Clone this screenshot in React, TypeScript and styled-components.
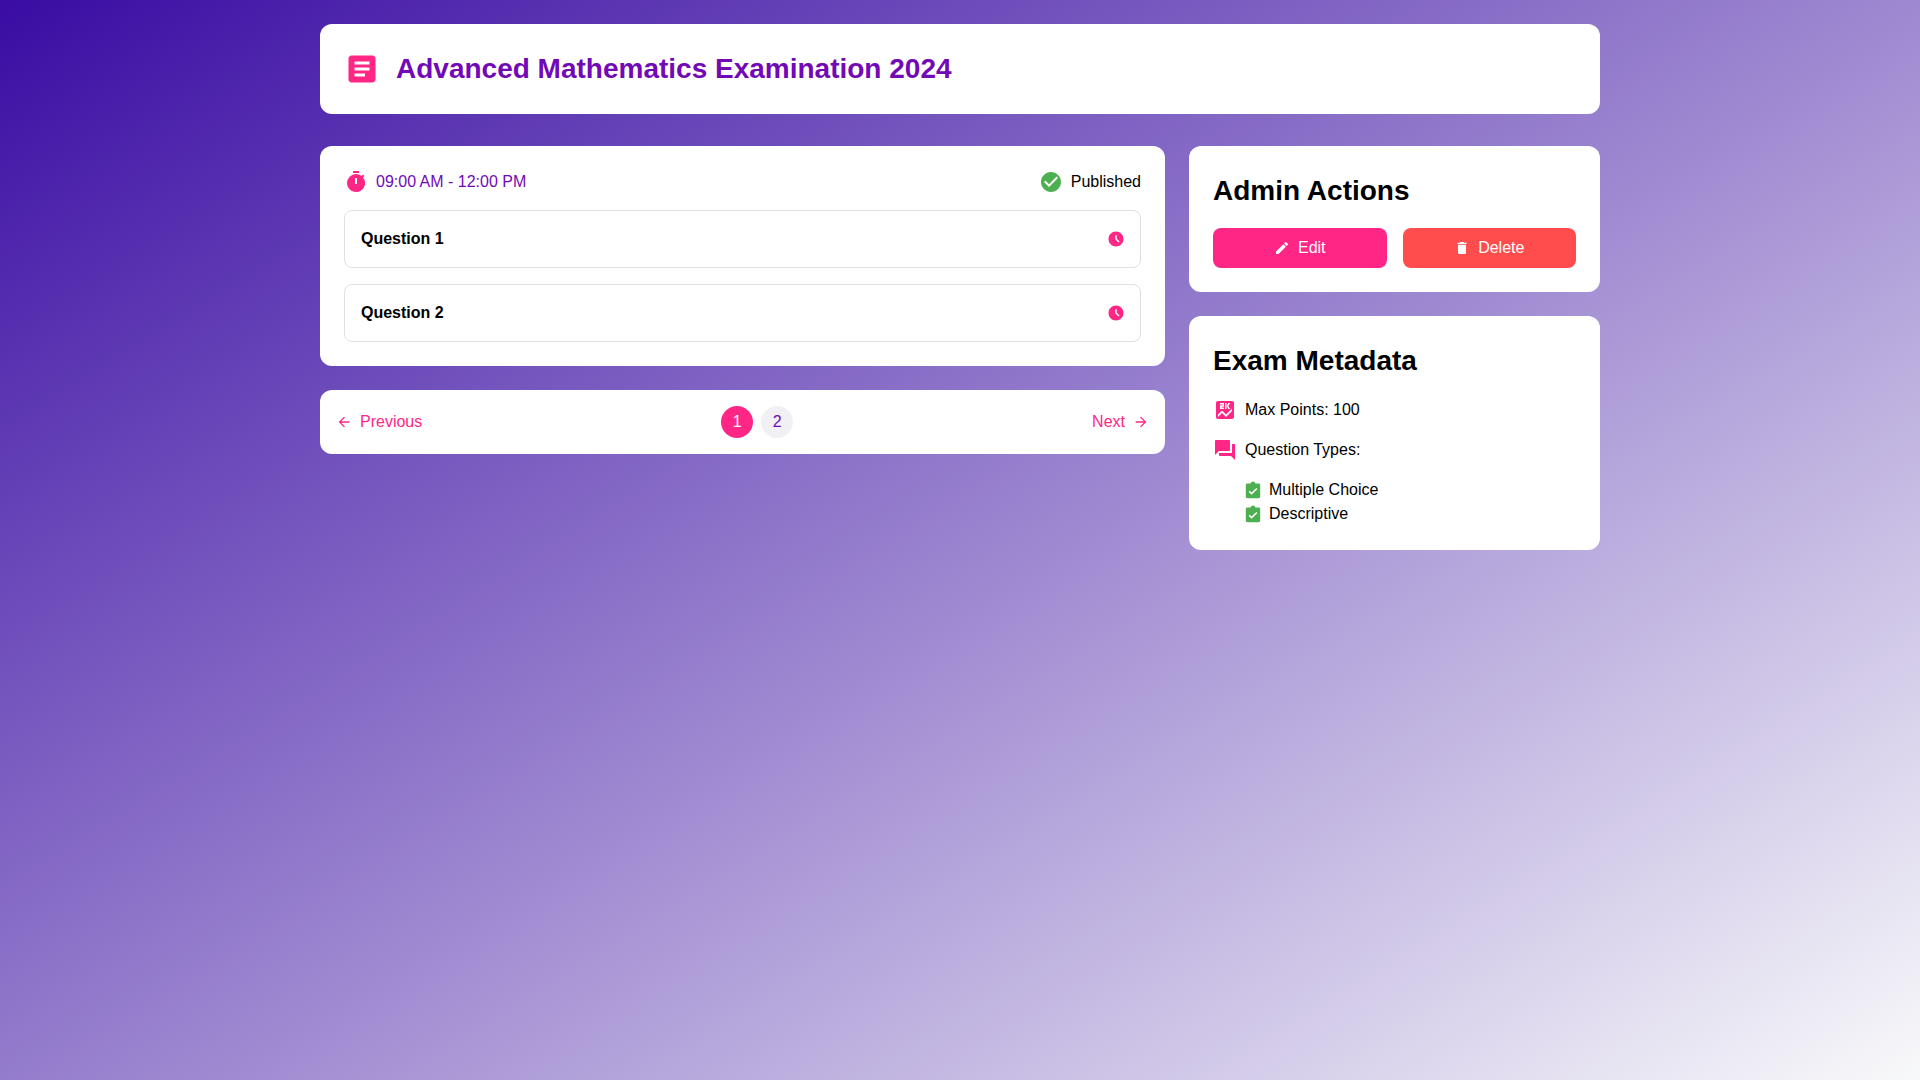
import React from "react";
import styled, { createGlobalStyle } from "styled-components";
import {
  MdArticle,
  MdTimer,
  MdCheckCircle,
  MdAccessTimeFilled,
  MdArrowBack,
  MdArrowForward,
  MdEdit,
  MdDelete,
  MdScore,
  MdQuestionAnswer,
} from "react-icons/md";

const pink = "#ff2686";
const purple = "#7209b7";
const green = "#4caf50";

const GlobalStyle = createGlobalStyle`
  * {
    box-sizing: border-box;
  }
  body {
    margin: 0;
    font-family: "Liberation Sans", Arial, sans-serif;
    font-size: 16px;
    line-height: 1.5;
    color: #000;
  }
`;

const Page = styled.div`
  min-height: 100vh;
  padding: 24px;
  background: linear-gradient(148deg, #3a0ca3 0%, #f8f9fa 100%);
`;

const Container = styled.div`
  width: 1280px;
  margin: 0 auto;
`;

const Card = styled.section`
  background: #fff;
  border-radius: 12px;
  padding: 24px;
`;

const Header = styled(Card)`
  display: flex;
  align-items: center;
  gap: 16px;
  margin-bottom: 32px;
  color: ${pink};
`;

const Title = styled.h1`
  margin: 0;
  font-size: 28px;
  font-weight: 700;
  color: ${purple};
`;

const Layout = styled.div`
  display: grid;
  grid-template-columns: minmax(0, 1fr) 411px;
  gap: 24px;
  align-items: start;
`;

const Column = styled.div`
  display: flex;
  flex-direction: column;
  gap: 24px;
`;

const ExamMeta = styled.div`
  display: flex;
  justify-content: space-between;
  align-items: center;
  margin-bottom: 16px;
`;

const MetaItem = styled.div<{ $color?: string }>`
  display: flex;
  align-items: center;
  gap: 8px;
  color: ${(p) => p.$color || "#000"};
  svg {
    display: block;
    flex-shrink: 0;
  }
`;

const TimerIcon = styled(MdTimer)`
  color: ${pink};
`;

const PublishedIcon = styled(MdCheckCircle)`
  color: ${green};
`;

const Question = styled.div`
  display: flex;
  justify-content: space-between;
  align-items: center;
  padding: 16px 15px 16px 16px;
  border: 1px solid #e0e0e0;
  border-radius: 8px;
  font-weight: 700;
  color: #000;
  & + & {
    margin-top: 16px;
  }
  svg {
    display: block;
    color: ${pink};
  }
`;

const Pagination = styled(Card)`
  display: flex;
  justify-content: space-between;
  align-items: center;
  padding: 16px;
`;

const NavButton = styled.button`
  display: flex;
  align-items: center;
  gap: 8px;
  padding: 0;
  border: none;
  background: none;
  color: ${pink};
  font: inherit;
  cursor: pointer;
`;

const Pages = styled.div`
  display: flex;
  gap: 8px;
`;

const PageButton = styled.button<{ $active?: boolean }>`
  width: 32px;
  height: 32px;
  padding: 0;
  border: none;
  border-radius: 50%;
  background: ${(p) => (p.$active ? pink : "#f0f0f5")};
  color: ${(p) => (p.$active ? "#fff" : purple)};
  font: inherit;
  cursor: pointer;
`;

const SectionTitle = styled.h2`
  margin: 0 0 16px;
  font-size: 28px;
  font-weight: 700;
  color: #000;
`;

const Actions = styled.div`
  display: flex;
  gap: 16px;
`;

const ActionButton = styled.button<{ $danger?: boolean }>`
  flex: 1;
  display: flex;
  justify-content: center;
  align-items: center;
  gap: 8px;
  height: 40px;
  border: none;
  border-radius: 8px;
  background: ${(p) => (p.$danger ? "#ff4d4d" : pink)};
  color: #fff;
  font: inherit;
  cursor: pointer;
`;

const InfoRow = styled.div`
  display: flex;
  align-items: center;
  gap: 8px;
  margin-bottom: 16px;
  svg {
    display: block;
    color: ${pink};
  }
`;

const TypeList = styled.ul`
  list-style: none;
  margin: 0;
  padding: 0 0 0 32px;
`;

const TypeItem = styled.li`
  display: flex;
  align-items: center;
  gap: 8px;
  svg {
    display: block;
    width: 16px;
    height: 18px;
    color: ${green};
  }
`;

// clipboard with a tick, narrower than the Material one
const TypeIcon = () => (
  <svg viewBox="0 0 16 18" fill="currentColor">
    <path d="M13.6 2.4h-3.3C10 1.3 9.1.6 8 .6s-2 .7-2.3 1.8H2.4c-.9 0-1.6.7-1.6 1.6v11.6c0 .9.7 1.6 1.6 1.6h11.2c.9 0 1.6-.7 1.6-1.6V4c0-.9-.7-1.6-1.6-1.6zM6.6 13.8 3.6 10.8l1.1-1.1 1.9 1.9 4.7-4.7 1.1 1.1-5.8 5.8z" />
  </svg>
);

export default function App() {
  return (
    <Page>
      <GlobalStyle />
      <Container>
        <Header>
          <MdArticle size={36} />
          <Title>Advanced Mathematics Examination 2024</Title>
        </Header>
        <Layout>
          <Column>
            <Card>
              <ExamMeta>
                <MetaItem $color={purple}>
                  <TimerIcon size={24} />
                  09:00 AM - 12:00 PM
                </MetaItem>
                <MetaItem>
                  <PublishedIcon size={24} />
                  Published
                </MetaItem>
              </ExamMeta>
              <Question>
                Question 1
                <MdAccessTimeFilled size={18} />
              </Question>
              <Question>
                Question 2
                <MdAccessTimeFilled size={18} />
              </Question>
            </Card>
            <Pagination>
              <NavButton>
                <MdArrowBack size={16} />
                Previous
              </NavButton>
              <Pages>
                <PageButton $active>1</PageButton>
                <PageButton>2</PageButton>
              </Pages>
              <NavButton>
                Next
                <MdArrowForward size={16} />
              </NavButton>
            </Pagination>
          </Column>
          <Column>
            <Card>
              <SectionTitle>Admin Actions</SectionTitle>
              <Actions>
                <ActionButton>
                  <MdEdit size={16} />
                  Edit
                </ActionButton>
                <ActionButton $danger>
                  <MdDelete size={16} />
                  Delete
                </ActionButton>
              </Actions>
            </Card>
            <Card>
              <SectionTitle>Exam Metadata</SectionTitle>
              <InfoRow>
                <MdScore size={24} />
                Max Points: 100
              </InfoRow>
              <InfoRow>
                <MdQuestionAnswer size={24} />
                Question Types:
              </InfoRow>
              <TypeList>
                <TypeItem>
                  <TypeIcon />
                  Multiple Choice
                </TypeItem>
                <TypeItem>
                  <TypeIcon />
                  Descriptive
                </TypeItem>
              </TypeList>
            </Card>
          </Column>
        </Layout>
      </Container>
    </Page>
  );
}
